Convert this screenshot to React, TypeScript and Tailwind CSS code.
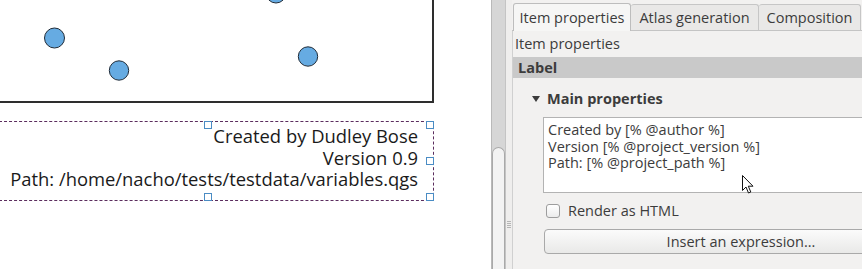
import React from "react";

const Handle = ({ className }: { className: string }) => (
  <div className={`absolute w-[8px] h-[8px] border border-[#4a8cc4] bg-white ${className}`} />
);

export default function App() {
  return (
    <div
      className="w-[862px] h-[269px] flex overflow-hidden bg-white text-[#3c3c3c]"
      style={{ fontFamily: '"Open Sans", "Noto Sans", sans-serif' }}
    >
      {/* Composer canvas */}
      <div className="relative w-[491px] h-full bg-white overflow-hidden shrink-0">
        <div className="absolute left-[-4px] top-[-20px] w-[438px] h-[123px] border-2 border-[#2e2e2e]" />
        <svg className="absolute left-0 top-0" width="491" height="110">
          <g fill="#66abe2" stroke="#1f2b38" strokeWidth="1">
            <circle cx="54.5" cy="38" r="10" />
            <circle cx="119" cy="70.5" r="9.7" />
            <circle cx="308" cy="56.5" r="9.7" />
            <circle cx="276" cy="-7" r="10" />
          </g>
        </svg>
        <div className="absolute left-[-1px] top-[121px] w-[435px] h-[80px] border border-dashed border-[#5b2d5e]">
          <div className="pt-[3px] pr-[15px] text-right text-[18.4px] leading-[21.5px] text-[#1a1a1a] whitespace-nowrap">
            <div>Created by Dudley Bose</div>
            <div>Version 0.9</div>
            <div>Path: /home/nacho/tests/testdata/variables.qgs</div>
          </div>
        </div>
        <Handle className="left-[204px] top-[121px]" />
        <Handle className="left-[426px] top-[121px]" />
        <Handle className="left-[426px] top-[157px]" />
        <Handle className="left-[204px] top-[193px]" />
        <Handle className="left-[426px] top-[193px]" />
      </div>

      {/* Scrollbar + splitter */}
      <div className="w-[1px] h-full bg-[#b9b9b9] shrink-0" />
      <div className="w-[13px] h-full bg-[#d6d6d6] shrink-0 flex flex-col">
        <div className="h-[147px]" />
        <div className="flex-1 bg-[#f3f3f3] border border-[#a9a9a9] border-b-0 rounded-t-[7px]" />
      </div>
      <div className="w-[1px] h-full bg-[#c4c4c4] shrink-0" />
      <div className="w-[6px] h-full bg-[#efeeed] shrink-0 flex flex-col items-center">
        <div className="h-[221px]" />
        <div className="w-[4px] flex flex-col gap-[1px]">
          <div className="h-[1px] bg-[#b5b5b5]" />
          <div className="h-[1px] bg-[#b5b5b5]" />
          <div className="h-[1px] bg-[#b5b5b5]" />
          <div className="h-[1px] bg-[#b5b5b5]" />
        </div>
      </div>

      {/* Properties panel */}
      <div className="flex-1 h-full bg-[#f2f1f0] flex flex-col min-w-0 text-[14.5px]">
        <div className="h-[31px] flex items-end pl-[1px] border-b border-[#c4c4c4] relative shrink-0">
          <div className="h-[28px] w-[118px] bg-[#f6f6f5] border border-[#bdbdbd] border-b-0 rounded-t-[3px] flex items-center justify-center text-[#3c3c3c] relative top-[1px] z-10">
            Item properties
          </div>
          <div className="h-[26px] w-[128px] bg-[#e9e8e7] border border-[#c6c6c6] border-b-0 border-l-0 rounded-t-[3px] flex items-center justify-center text-[#3c3c3c]">
            Atlas generation
          </div>
          <div className="h-[26px] w-[102px] bg-[#e9e8e7] border border-[#c6c6c6] border-b-0 border-l-0 rounded-t-[3px] flex items-center justify-center text-[#3c3c3c]">
            Composition
          </div>
        </div>
        <div className="flex-1 border-l border-[#d0d0d0] flex flex-col">
          <div className="h-[26px] shrink-0 flex items-center pl-[2px] text-[#3c3c3c]">Item properties</div>
          <div className="h-[21px] shrink-0 bg-[#c9c9c9] flex items-center pl-[5px] font-bold text-[#3c3c3c]">Label</div>
          <div className="flex items-center h-[39px] shrink-0 pl-[19px] pt-[2px]">
            <svg width="8" height="6" viewBox="0 0 8 6" className="mr-[7px]">
              <path d="M0 0 L8 0 L4 6 Z" fill="#3c3c3c" />
            </svg>
            <span className="font-bold text-[#3c3c3c]">Main properties</span>
          </div>
          <div className="relative shrink-0 ml-[30px] h-[76px] bg-white border border-[#b3b3b3] border-r-0 pl-[4px] pt-[4px] text-[14.5px] leading-[16.5px] text-[#3c3c3c] whitespace-nowrap">
            <div>Created by [% @author %]</div>
            <div>Version [% @project_version %]</div>
            <div>Path: [% @project_path %]</div>
            <svg className="absolute left-[198px] top-[57px]" width="12" height="19" viewBox="0 0 12 19">
              <path
                d="M0.5 0.5 L0.5 15.5 L4 12 L6.5 18 L8.8 17 L6.3 11.2 L11 11.2 Z"
                fill="#ffffff"
                stroke="#111111"
                strokeWidth="1"
                strokeLinejoin="round"
              />
            </svg>
          </div>
          <div className="flex items-center h-[36px] shrink-0 pl-[33px]">
            <div className="w-[14px] h-[14px] rounded-[3px] border border-[#9d9d9d] bg-gradient-to-b from-[#ffffff] to-[#ececec]" />
            <span className="ml-[8px] text-[#3c3c3c]">Render as HTML</span>
          </div>
          <div className="ml-[31px] shrink-0 h-[25px] w-[394px] rounded-[4px] border border-[#a9a9a9] bg-gradient-to-b from-[#fbfbfb] to-[#e9e9e8] flex items-center justify-center text-[#3c3c3c]">
            Insert an expression...
          </div>
        </div>
      </div>
    </div>
  );
}
